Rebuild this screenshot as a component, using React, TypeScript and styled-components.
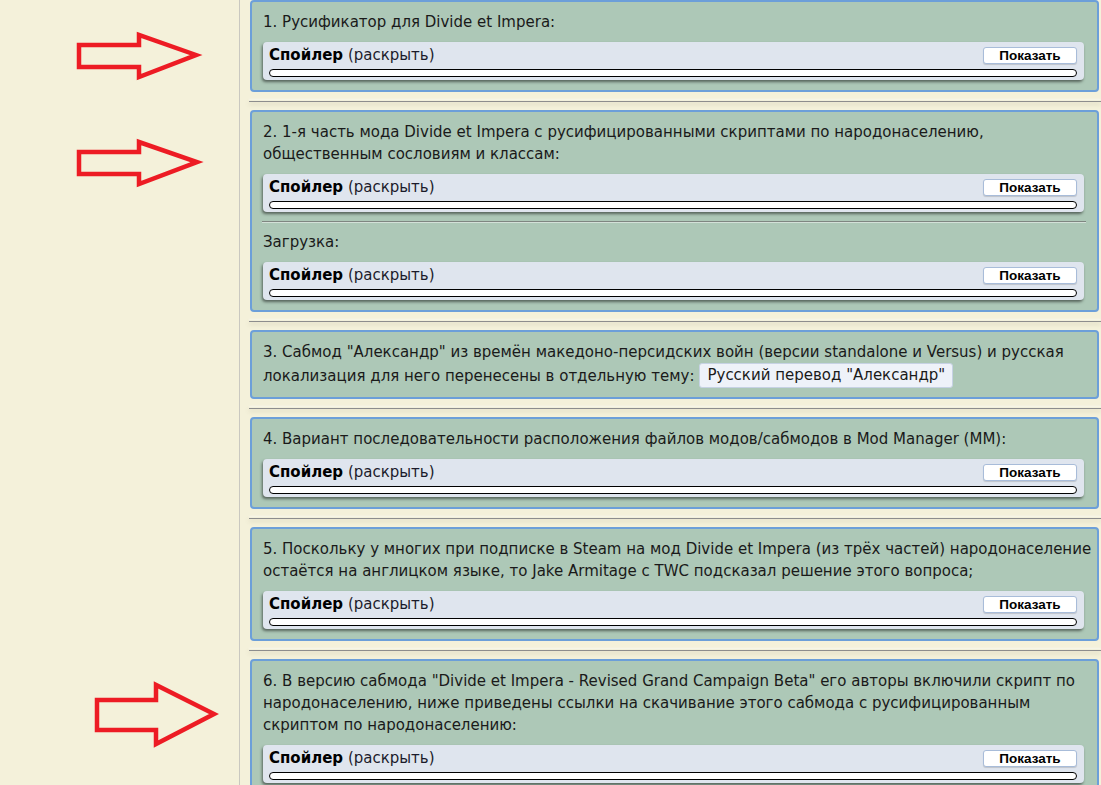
import React from "react";
import styled, { createGlobalStyle } from "styled-components";

const GlobalStyle = createGlobalStyle`
  html, body {
    margin: 0;
    padding: 0;
    background: #f4f1da;
    overflow: hidden;
  }
  body {
    font-family: "DejaVu Sans", Verdana, sans-serif;
  }
`;

const Page = styled.div`
  display: flex;
  align-items: flex-start;
  width: 1101px;
  height: 785px;
  overflow: hidden;
  background: #f4f1da;
`;

const Sidebar = styled.aside`
  position: relative;
  flex: 0 0 239px;
  align-self: stretch;
  border-right: 1px solid #c9c8c0;
`;

const ArrowLayer = styled.svg`
  position: absolute;
  left: 0;
  top: 0;
`;

const Content = styled.main`
  flex: 1;
  min-width: 0;
  padding: 0 2px 0 10px;
  display: flex;
  flex-direction: column;
  & > * {
    flex-shrink: 0;
  }
`;

const Post = styled.section<{ $padBottom?: number }>`
  background: #adc8b7;
  border: 2px solid #6c9fd9;
  border-radius: 4px;
  padding: 9px 13px ${(p) => p.$padBottom ?? 10}px 11px;
  color: #1a1a1a;
  font-size: 15px;
  line-height: 22px;
`;

const Text = styled.div`
  white-space: nowrap;
`;

const LinkRow = styled.div`
  display: flex;
  align-items: center;
  height: 25px;
  white-space: nowrap;
`;

const Divider = styled.hr`
  margin: 9px -2px 8px -1px;
  border: 0;
  height: 1px;
  background: #8d8d8d;
  box-shadow: 0 -2px 2px rgba(255, 255, 255, 0.75), 0 2px 4px rgba(110, 100, 70, 0.35);
`;

const InnerRule = styled.hr`
  margin: 9px -2px 8px -1px;
  border: 0;
  border-top: 1px solid #7f8681;
  border-bottom: 1px solid #d3e1d8;
  height: 0;
`;

const Spoiler = styled.div`
  margin-top: 9px;
  background: #dfe5ee;
  border-radius: 4px;
  padding: 3px 7px 3px 6px;
  box-shadow: -1px 2px 3px rgba(0, 0, 0, 0.5);
`;

const SpoilerHead = styled.div`
  display: flex;
  align-items: center;
  justify-content: space-between;
  height: 20px;
`;

const SpoilerTitle = styled.span`
  font-size: 15px;
  line-height: 20px;
  color: #111;
  white-space: nowrap;
`;

const SpoilerLabel = styled.b`
  font-weight: bold;
  color: #000;
`;

const SpoilerHint = styled.span`
  color: #1b1b2b;
`;

const ShowButton = styled.button`
  box-sizing: border-box;
  width: 94px;
  height: 17px;
  padding: 0;
  background: #fff;
  border: 1px solid #a8bcd9;
  border-radius: 3px;
  font: bold 13.5px "Liberation Sans", Arial, sans-serif;
  color: #000;
  line-height: 15px;
  box-shadow: 0 1px 1px rgba(0, 0, 0, 0.15);
`;

const Bar = styled.div`
  box-sizing: border-box;
  margin-top: 4px;
  height: 8px;
  border: 1px solid #000;
  border-radius: 4px;
  background: #fff;
`;

const TopicLink = styled.span`
  display: inline-block;
  box-sizing: border-box;
  height: 25px;
  line-height: 23px;
  padding: 0 7px;
  margin-left: 5px;
  background: #eef2f9;
  border: 1px solid #c6d2e4;
  border-radius: 3px;
`;

function SpoilerBox() {
  return (
    <Spoiler>
      <SpoilerHead>
        <SpoilerTitle>
          <SpoilerLabel>Спойлер</SpoilerLabel> <SpoilerHint>(раскрыть)</SpoilerHint>
        </SpoilerTitle>
        <ShowButton type="button">Показать</ShowButton>
      </SpoilerHead>
      <Bar />
    </Spoiler>
  );
}

const arrows = [
  "79,45 139,45 139,35 196,55 139,77 139,67 79,67",
  "79,152 139,152 139,142 197,162 139,184 139,174 79,174",
  "97,700 156,700 156,685 214,714 156,744 156,730 97,730",
];

export default function App() {
  return (
    <>
      <GlobalStyle />
      <Page>
        <Sidebar>
          <ArrowLayer width="239" height="785" viewBox="0 0 239 785">
            {arrows.map((pts) => (
              <polygon
                key={pts}
                points={pts}
                fill="none"
                stroke="#ed1c24"
                strokeWidth="4.5"
                strokeLinejoin="miter"
              />
            ))}
          </ArrowLayer>
        </Sidebar>
        <Content>
          <Post>
            <Text>1. Русификатор для Divide et Impera:</Text>
            <SpoilerBox />
          </Post>
          <Divider />
          <Post>
            <Text>
              2. 1-я часть мода Divide et Impera с русифицированными скриптами по народонаселению,
              <br />
              общественным сословиям и классам:
            </Text>
            <SpoilerBox />
            <InnerRule />
            <Text>Загрузка:</Text>
            <SpoilerBox />
          </Post>
          <Divider />
          <Post $padBottom={9}>
            <Text>
              3. Сабмод "Александр" из времён македоно-персидских войн (версии standalone и Versus) и русская
            </Text>
            <LinkRow>
              локализация для него перенесены в отдельную тему:
              <TopicLink>Русский перевод "Александр"</TopicLink>
            </LinkRow>
          </Post>
          <Divider />
          <Post>
            <Text>
              4. Вариант последовательности расположения файлов модов/сабмодов в Mod Manager (MM):
            </Text>
            <SpoilerBox />
          </Post>
          <Divider />
          <Post>
            <Text>
              5. Поскольку у многих при подписке в Steam на мод Divide et Impera (из трёх частей) народонаселение
              <br />
              остаётся на англицком языке, то Jake Armitage с TWC подсказал решение этого вопроса;
            </Text>
            <SpoilerBox />
          </Post>
          <Divider />
          <Post>
            <Text>
              6. В версию сабмода "Divide et Impera - Revised Grand Campaign Beta" его авторы включили скрипт по
              <br />
              народонаселению, ниже приведены ссылки на скачивание этого сабмода с русифицированным
              <br />
              скриптом по народонаселению:
            </Text>
            <SpoilerBox />
          </Post>
        </Content>
      </Page>
    </>
  );
}
